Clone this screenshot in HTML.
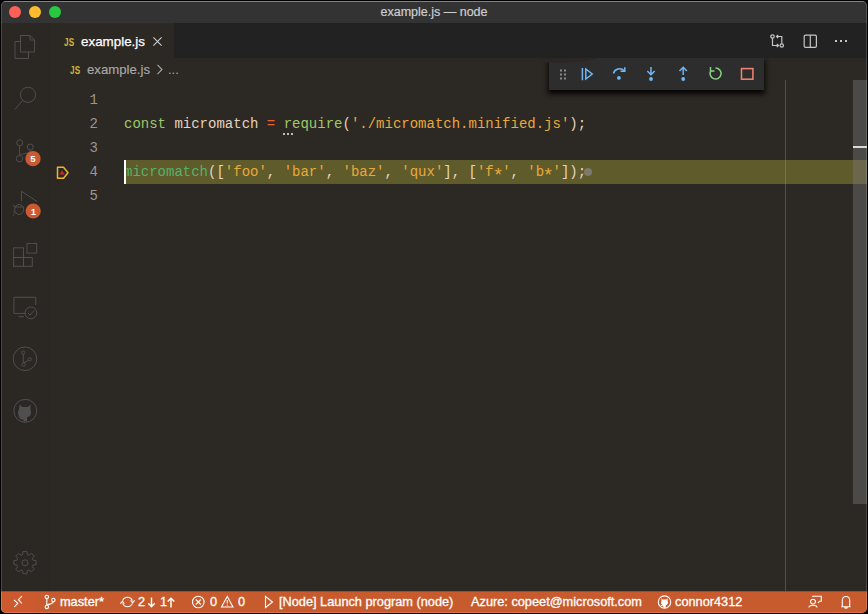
<!DOCTYPE html>
<html><head><meta charset="utf-8">
<style>
*{box-sizing:border-box;margin:0;padding:0}
html,body{width:868px;height:614px;background:#000;overflow:hidden}
body{position:relative;font-family:"Liberation Sans",sans-serif}
.a{position:absolute}
svg{position:absolute;overflow:visible}
#win{position:absolute;left:0;top:0;width:868px;height:614px;background:#000}
#frame{position:absolute;left:1px;top:1px;width:866px;height:612px;background:#2c2823;border-radius:5px;overflow:hidden}
#title{left:0;top:0;width:866px;height:22px;background:#333333;border-top:1px solid #6a6a6a}
#title .t{position:absolute;left:0;width:100%;top:3px;line-height:14px;text-align:center;font-size:12.5px;color:#cecece;-webkit-text-stroke:0.2px #cecece}
.light{position:absolute;top:4px;width:12px;height:12px;border-radius:50%}
.code{position:absolute;font-family:"Liberation Mono",monospace;font-size:14px;line-height:24px;white-space:pre;color:#e6d3bd}
.ln{position:absolute;font-family:"Liberation Mono",monospace;font-size:14px;line-height:24px;color:#9a968f;text-align:right;width:30px}
.st{position:absolute;top:593px;line-height:15px;font-size:12.75px;color:#fff;white-space:pre;-webkit-text-stroke:0.3px #fff}
.ast{display:inline-block;width:8.4px;text-align:center;transform:translateY(3.5px) scale(1.3)}
.kw{color:#9fc86a}.str{color:#e9a93c}.op{color:#e3633a}.fn{color:#9fc86a}
.js{position:absolute;font-weight:bold;color:#d1b53e;font-size:10.5px;line-height:10px;letter-spacing:0.2px;transform:scaleX(0.78);transform-origin:0 0}
</style></head><body>
<div id="win">
<div id="frame">
  <div id="title" class="a">
    <div class="light" style="left:8px;background:#fe5f57"></div>
    <div class="light" style="left:28px;background:#febc2e"></div>
    <div class="light" style="left:48px;background:#28c840"></div>
    <div class="t">example.js — node</div>
  </div>
  <!-- tab bar -->
  <div class="a" style="left:173px;top:22px;width:693px;height:35px;background:#222222"></div>
  <div class="js" style="left:63px;top:35.5px">JS</div>
  <div class="a" style="left:80px;top:33px;font-size:13.4px;line-height:16px;color:#ffffff;-webkit-text-stroke:0.25px #fff">example.js</div>
  <svg style="left:151px;top:35px" width="11" height="11" viewBox="0 0 11 11"><path d="M1.4 1.4L9.6 9.6M9.6 1.4L1.4 9.6" stroke="#cfcfcf" stroke-width="1.05" fill="none"/></svg>
  <!-- header actions -->
  <svg style="left:768px;top:32px" width="18" height="16" viewBox="0 0 18 16" fill="none" stroke="#c5c5c5" stroke-width="1.2">
    <circle cx="3.5" cy="3.5" r="1.7"/><path d="M3.5 5.2V12.5H9.5M7.8 10.8L9.5 12.5L7.8 14.2"/>
    <circle cx="12.8" cy="12.5" r="1.7"/><path d="M12.8 10.8V3.5H7.5M9.2 1.8L7.5 3.5L9.2 5.2"/>
  </svg>
  <svg style="left:801px;top:32px" width="16" height="16" viewBox="0 0 16 16" fill="none" stroke="#c5c5c5" stroke-width="1.2">
    <rect x="2.2" y="2.2" width="12.2" height="12.2" rx="1.3"/><path d="M8.3 2.2V14.4"/>
  </svg>
  <div class="a" style="left:834px;top:39px;width:2.4px;height:2.4px;background:#c5c5c5"></div>
  <div class="a" style="left:839px;top:39px;width:2.4px;height:2.4px;background:#c5c5c5"></div>
  <div class="a" style="left:844px;top:39px;width:2.4px;height:2.4px;background:#c5c5c5"></div>
  <!-- breadcrumbs -->
  <div class="js" style="left:69px;top:63.5px">JS</div>
  <div class="a" style="left:86px;top:61px;font-size:13.2px;line-height:16px;color:#a8a8a8;-webkit-text-stroke:0.15px #a8a8a8">example.js</div>
  <svg style="left:155px;top:63px" width="8" height="11" viewBox="0 0 8 11"><path d="M1.5 0.8L6 5.5L1.5 10.2" stroke="#a8a8a8" stroke-width="1.1" fill="none"/></svg>
  <div class="a" style="left:167px;top:61px;font-size:13px;line-height:16px;color:#a8a8a8">...</div>

  <div class="a" style="left:0;top:22px;width:49px;height:568px;background:#2b2723"></div>
  <!-- activity bar icons -->
  <svg style="left:0;top:0" width="50" height="590" viewBox="0 0 50 590" fill="none" stroke="#4f4f4f" stroke-width="1">
    <!-- files (coords offset by -1 for frame) -->
    <path d="M19.5 34.5H29L33.5 39V51H19.5Z M29 34.5V39H33.5"/>
    <path d="M19.5 40.5H14V57.5H27.5V51"/>
    <!-- search -->
    <circle cx="27" cy="93.8" r="7.6"/><path d="M21.8 99.3L14 108.3"/>
    <!-- scm -->
    <circle cx="18.7" cy="141.8" r="3"/><circle cx="29.3" cy="146" r="3"/><circle cx="18.5" cy="157.7" r="3.2"/>
    <path d="M18.6 144.8V154.5M29.3 149C29.3 152 25 152.5 19.5 153.5"/>
    <!-- debug -->
    <path d="M20.5 190.3V200M20.5 190.3L36 200.5"/>
    <ellipse cx="18.2" cy="208.5" rx="4.5" ry="5"/><path d="M13.7 206H22.7M12 204L14 206M12 211H13.7M12 214.5L14 212.5"/>
    <!-- extensions -->
    <rect x="12.6" y="246.8" width="9.9" height="9.7"/><rect x="12.6" y="256.5" width="9.9" height="8.8"/><rect x="22.5" y="256.5" width="8.8" height="8.8"/>
    <rect x="26" y="242.4" width="9.7" height="9.7"/>
    <!-- remote explorer -->
    <path d="M24.5 312.4H12.9V296.3H34.8V304"/><path d="M17.5 315.7H23"/>
    <circle cx="29.9" cy="311.9" r="5.9"/><path d="M27 312L29 314L33 309.5"/>
    <!-- git graph -->
    <circle cx="24" cy="357.8" r="11.8"/>
    <circle cx="22.2" cy="351.6" r="1.6"/><circle cx="22.5" cy="363.6" r="1.7"/><circle cx="28.7" cy="358.3" r="1.6"/>
    <path d="M22.3 353.2V361.9M22.8 361.8L27.5 359.4"/>
    <!-- github -->
    <circle cx="24.3" cy="409.8" r="11.5"/>
  </svg>
  <svg style="left:0;top:0" width="50" height="590" viewBox="0 0 50 590">
    <path d="M19 403.5L21 406H27L29.5 403.5V409L30 412C30 414.5 28 416 26 416.3V420.5H22.5V418.5C20.5 419 19 418 18 416.5L16.5 415.5C18 415.5 19.5 416 20.5 416.5V416.3C18.5 416 17 414.5 17 412L17.6 409Z" fill="#4f4f4f"/>
    <!-- gear -->
    <g transform="translate(24 561.6)" fill="none" stroke="#4f4f4f" stroke-width="1">
      <path stroke-linejoin="round" d="M-2.43 -7.94 L-1.96 -11.13 L1.96 -11.13 L2.43 -7.94 L3.90 -7.33 L6.48 -9.26 L9.26 -6.48 L7.33 -3.90 L7.94 -2.43 L11.13 -1.96 L11.13 1.96 L7.94 2.43 L7.33 3.90 L9.26 6.48 L6.48 9.26 L3.90 7.33 L2.43 7.94 L1.96 11.13 L-1.96 11.13 L-2.43 7.94 L-3.90 7.33 L-6.48 9.26 L-9.26 6.48 L-7.33 3.90 L-7.94 2.43 L-11.13 1.96 L-11.13 -1.96 L-7.94 -2.43 L-7.33 -3.90 L-9.26 -6.48 L-6.48 -9.26 L-3.90 -7.33Z"/>
      <circle cx="0" cy="0.2" r="3"/>
    </g>
    <!-- badges -->
    <circle cx="32" cy="157.7" r="7.6" fill="#cb5a33"/>
    <circle cx="32.2" cy="210" r="7.6" fill="#cb5a33"/>
  </svg>
  <div class="a" style="left:25px;top:152px;width:14px;text-align:center;font-size:9.5px;font-weight:bold;line-height:11px;color:#fff">5</div>
  <div class="a" style="left:25.3px;top:204.5px;width:14px;text-align:center;font-size:9.5px;font-weight:bold;line-height:11px;color:#fff">1</div>

  <!-- editor -->
  <div class="ln" style="left:67px;top:87px">1</div>
  <div class="ln" style="left:67px;top:111px">2</div>
  <div class="ln" style="left:67px;top:135px">3</div>
  <div class="ln" style="left:67px;top:159px">4</div>
  <div class="ln" style="left:67px;top:183px">5</div>
  <div class="a" style="left:123px;top:159px;width:743px;height:24px;background:#605b2b"></div>
  <div class="code" style="left:123px;top:111px"><span class="kw">const</span> micromatch <span class="op">=</span> <span class="fn">require</span>(<span class="str">'./micromatch.minified.js'</span>);</div>
  <div class="a" style="left:282px;top:132px;width:2px;height:2px;background:#c4beb4;box-shadow:4px 0 #c4beb4,8px 0 #c4beb4"></div>
  <div class="code" style="left:123px;top:159px"><span style="color:#55b26c">micromatch</span>([<span class="str">'foo'</span>, <span class="str">'bar'</span>, <span class="str">'baz'</span>, <span class="str">'qux'</span>], [<span class="str">'f<span class="ast">*</span>'</span>, <span class="str">'b<span class="ast">*</span>'</span>]);</div>
  <div class="a" style="left:123px;top:159px;width:2px;height:24px;background:#fff"></div>
  <div class="a" style="left:583px;top:167px;width:8px;height:8px;border-radius:50%;background:#7c7b6e"></div>
  <!-- debug gutter arrow -->
  <svg style="left:54px;top:164px" width="16" height="16" viewBox="0 0 16 16">
    <path d="M2.5 2.3H8.5L13 7.8L8.5 13.2H2.5Z" fill="none" stroke="#f0b428" stroke-width="1.5" stroke-linejoin="round"/>
    <path d="M4.3 9.6L7 5.6L9.7 9.6Z" fill="#d42828"/>
  </svg>
  <div class="a" style="left:784px;top:79px;width:1px;height:511px;background:rgba(160,160,160,0.33)"></div>
  <!-- scrollbar -->
  <div class="a" style="left:852px;top:79px;width:14px;height:424px;background:rgba(121,121,121,0.42)"></div>
  <div class="a" style="left:852px;top:145px;width:14px;height:2px;background:#d8d8d8"></div>

  <!-- debug toolbar -->
  <div class="a" style="left:548px;top:57px;width:215px;height:32px;background:#2d2d2d;box-shadow:0 3px 5px 1px rgba(0,0,0,0.85)"></div>
  <div class="a" style="left:530px;top:47px;width:250px;height:10px;background:#222222"></div>
  <svg style="left:0;top:0" width="866" height="100" viewBox="0 0 866 100"><path d="M540 57H596L586 60L566 61.5H540Z" fill="#2b2722"/></svg>
  <svg style="left:548px;top:57px" width="215" height="32" viewBox="0 0 215 32" fill="none">
    <g fill="#8a8a8a"><rect x="11" y="11.5" width="2" height="2"/><rect x="15" y="11.5" width="2" height="2"/><rect x="11" y="15.5" width="2" height="2"/><rect x="15" y="15.5" width="2" height="2"/><rect x="11" y="19.5" width="2" height="2"/><rect x="15" y="19.5" width="2" height="2"/></g>
    <g stroke="#6fb8f7" stroke-width="1.5">
      <path d="M33.4 10V22.2"/><path d="M36.8 11L43.2 16L36.8 21Z"/>
      <path d="M64.5 15.5C65.5 11 71.5 9 75.5 13"/><path d="M75.8 9.2V13.3H71.5"/>
      <path d="M102 9V16.5M98.3 13L102 16.7L105.7 13"/>
      <path d="M134.2 17V9.3M130.5 13L134.2 9.3L137.9 13"/>
    </g>
    <g fill="#6fb8f7"><circle cx="69.9" cy="19.9" r="1.9"/><circle cx="102" cy="21" r="1.9"/><circle cx="134.2" cy="21" r="1.9"/></g>
    <path d="M162 12.5A5.5 5.5 0 1 0 166.5 10" stroke="#89d185" stroke-width="1.5"/>
    <path d="M161.5 9V13H165.5" stroke="#89d185" stroke-width="1.5"/>
    <rect x="192.5" y="10.6" width="11.4" height="10.6" stroke="#f48771" stroke-width="1.5"/>
  </svg>

  <!-- status bar -->
  <div class="a" style="left:0;top:590px;width:866px;height:1px;background:#5b6062"></div>
  <div class="a" style="left:0;top:591px;width:866px;height:21px;background:#c75b2e"></div>
  <div class="a" style="left:0;top:591px;width:36px;height:21px;background:#cd5a2f"></div>
  <svg style="left:0;top:590px" width="866" height="22" viewBox="0 0 866 22" fill="none" stroke="#fff" stroke-width="1.1">
    <path d="M13 9L16.8 12.2L13.3 16M20.9 5.2L17.5 8.7L20.9 12.5"/>
    <circle cx="45.8" cy="5.9" r="1.7"/><circle cx="45.8" cy="15.9" r="1.7"/><circle cx="52.4" cy="9" r="1.7"/>
    <path d="M45.8 7.6V14.2M52.4 10.7C52.4 13 48 12.5 46 14.5"/>
    <path d="M121.6 9.6A5.3 5.3 0 0 1 131.4 9.6M131.4 12.4A5.3 5.3 0 0 1 121.6 12.4"/>
    <path d="M129.6 9.4L131.6 11.6L133.6 9.4M119.4 12.6L121.4 10.4L123.4 12.6"/>
    <circle cx="197.3" cy="11" r="5.8"/><path d="M194.8 8.5L199.8 13.5M199.8 8.5L194.8 13.5"/>
    <path d="M226.3 5.5L232 16H220.5Z"/><path d="M226.3 9V12.5M226.3 13.8V14.8"/>
    <path d="M264.5 5.5L271.5 11L264.5 16.5Z"/>
    <circle cx="663.5" cy="11.1" r="6.2"/>
    <path d="M811 5.2H820.3V10.3L818.5 10.3L817 12"/><circle cx="812" cy="10.6" r="2.4"/><path d="M808 16.5C808 13.5 816 13.5 816 16.5"/>
    <path d="M840.2 15.8H849.5M841.3 15.8V9.5C841.3 7 843 5.5 845 5.5C847 5.5 848.7 7 848.7 9.5V15.8M843.5 16.5C844 17.3 846 17.3 846.5 16.5"/>
  </svg>
  <svg style="left:0;top:590px" width="866" height="22" viewBox="0 0 866 22">
    <path d="M660.5 7.3L661.6 8.6H665.4L666.6 7.3V10L667 11.5C667 13 666 14 664.8 14.2V16.8H662.3V15.2C661 15.5 660 15 659.5 14L660 13.8C660.6 14.3 661.5 14.6 662.2 14.3V14.2C661 14 660 13 660 11.5L660.5 10Z" fill="#fff"/>
  </svg>
  <div class="st" style="left:59px">master*</div>
  <div class="st" style="left:137px">2</div>
  <div class="st" style="left:159px">1</div>
  <svg style="left:146px;top:596px" width="30" height="12" viewBox="0 0 30 12" fill="none" stroke="#fff" stroke-width="1.45">
    <path d="M4.5 0.5V9.5M1.2 6.2L4.5 9.6L7.8 6.2"/>
    <path d="M24 10.5V1.2M20.7 4.6L24 1.2L27.3 4.6"/>
  </svg>
  <div class="st" style="left:209px">0</div>
  <div class="st" style="left:237px">0</div>
  <div class="st" style="left:278px">[Node] Launch program (node)</div>
  <div class="st" style="left:470px">Azure: copeet@microsoft.com</div>
  <div class="st" style="left:674px">connor4312</div>
</div>
<div class="a" style="left:1px;top:1px;width:866px;height:612px;border-radius:5px;box-shadow:inset 0 0 0 1px rgba(255,255,255,0.16);pointer-events:none"></div>
</div>
</body></html>
